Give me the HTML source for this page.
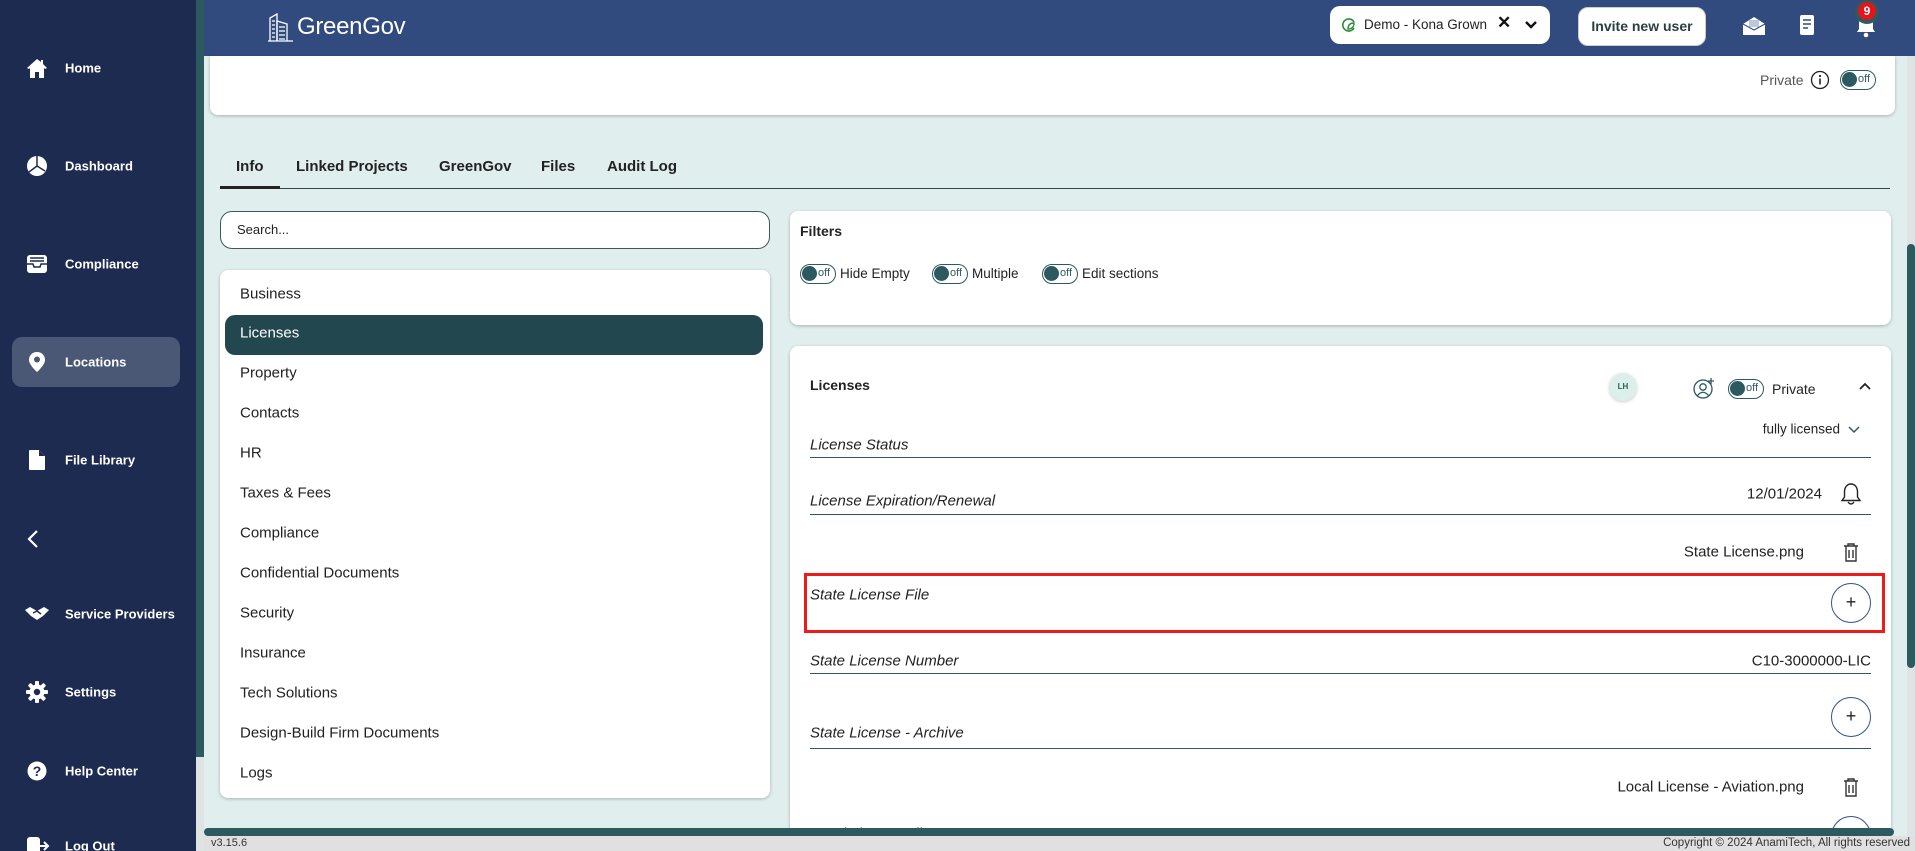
<!DOCTYPE html>
<html style="width:1915px;height:851px;overflow:hidden"><head><meta charset="utf-8">
<style>
*{box-sizing:border-box;margin:0;padding:0}
body{width:1915px;height:851px;overflow:hidden;position:relative;background:#e0eeee;font-family:"Liberation Sans",Arial,sans-serif;color:#222}
.a{position:absolute}
.side{left:0;top:0;width:196px;height:851px;background:#1e2b50}
.strip{left:196px;top:0;width:8px;height:757px;background:#2d5a5f}
.strip2{left:196px;top:757px;width:8px;height:94px;background:#dfe3e3}
.nav{left:65px;color:#fff;font-weight:bold;font-size:13px;transform:translateY(-50%)}
.ico{left:26px;transform:translateY(-50%)}
.hdr{left:204px;top:0;width:1711px;height:56px;background:#314b7f}
.card{background:#fff;border-radius:8px;box-shadow:0 1px 3px rgba(0,0,0,.25)}
.tab{top:158px;font-size:15px;font-weight:bold;color:#222}
.li{left:240px;font-size:15px;color:#222;transform:translateY(-50%)}
.lbl{left:810px;font-size:15px;font-style:italic;color:#222;transform:translateY(-50%)}
.line{left:810px;width:1061px;height:1px;background:#2d5a5f}
.val{font-size:15px;color:#222;transform:translateY(-50%)}
.tog{width:36px;height:20px;border:1.5px solid #2d5a5f;border-radius:10px;background:#fff}
.tog:before{content:"";position:absolute;left:1px;top:1px;width:15px;height:15px;border-radius:50%;background:#2d5a5f}
.tog span{position:absolute;left:17px;top:0;line-height:17px;font-size:11px;color:#2d5a5f}
.plus{width:40px;height:40px;border:1.5px solid #34508a;border-radius:50%;text-align:center;line-height:36px;font-size:18px;color:#222}
</style></head><body>
<div class="a side"></div>
<div class="a strip"></div><div class="a strip2"></div>
<div class="a" style="left:12px;top:337px;width:168px;height:50px;background:#4a5775;border-radius:10px"></div>

<svg class="a ico" style="top:68px" width="22" height="22" viewBox="0 0 22 22"><path d="M11 2 L1 11 L3 12 L4 11 V21 H9 V15 H13 V21 H18 V11 L19 12 L21 11 L17 7 V3 H15 V5 Z" fill="#fff"/></svg>
<div class="a nav" style="top:68px">Home</div>
<svg class="a ico" style="top:166px" width="22" height="22" viewBox="0 0 22 22"><circle cx="11" cy="11" r="10" fill="#fff"/><path d="M11 1 V11 L19 16" stroke="#1e2b50" stroke-width="1.5" fill="none"/><path d="M11 11 L3 17" stroke="#1e2b50" stroke-width="1.5"/></svg>
<div class="a nav" style="top:166px">Dashboard</div>
<svg class="a ico" style="top:264px" width="22" height="20" viewBox="0 0 22 20"><rect x="1" y="1" width="20" height="18" rx="3" fill="#fff"/><path d="M4 4 H18 M4 7 H18" stroke="#1e2b50" stroke-width="1.5"/><path d="M1 10 H7 L8 13 H14 L15 10 H21" stroke="#1e2b50" stroke-width="1.5" fill="none"/></svg>
<div class="a nav" style="top:264px">Compliance</div>
<svg class="a ico" style="top:362px;left:28px" width="18" height="22" viewBox="0 0 18 22"><path d="M9 1 C4 1 1 4.5 1 9 C1 14 9 21 9 21 C9 21 17 14 17 9 C17 4.5 14 1 9 1Z" fill="#fff"/><circle cx="9" cy="8.5" r="3" fill="#4a5775"/></svg>
<div class="a nav" style="top:362px">Locations</div>
<svg class="a ico" style="top:460px;left:28px" width="18" height="22" viewBox="0 0 18 22"><path d="M2 1 H11 L17 7 V20 Q17 21 16 21 H2 Q1 21 1 20 V2 Q1 1 2 1Z" fill="#fff"/><path d="M11 1 V7 H17" fill="#1e2b50"/></svg>
<div class="a nav" style="top:460px">File Library</div>
<svg class="a" style="left:26px;top:529px" width="14" height="20" viewBox="0 0 14 20"><path d="M11 2 L3 10 L11 18" stroke="#fff" stroke-width="2.2" fill="none"/></svg>
<svg class="a ico" style="top:614px;left:24px" width="26" height="18" viewBox="0 0 26 18"><path d="M1 5 L6 2 L13 6 L20 2 L25 5 L19 11 L13 15 L7 11Z" fill="#fff"/><path d="M9 8 L13 6 L17 9" stroke="#1e2b50" stroke-width="1.5" fill="none"/></svg>
<div class="a nav" style="top:614px">Service Providers</div>
<svg class="a ico" style="top:692px" width="22" height="22" viewBox="0 0 22 22"><g fill="#fff"><circle cx="11" cy="11" r="7.5"/><rect x="9" y="0" width="4" height="22" rx="1"/><rect x="0" y="9" width="22" height="4" rx="1"/><rect x="9" y="0" width="4" height="22" rx="1" transform="rotate(45 11 11)"/><rect x="9" y="0" width="4" height="22" rx="1" transform="rotate(-45 11 11)"/></g><circle cx="11" cy="11" r="3.2" fill="#1e2b50"/></svg>
<div class="a nav" style="top:692px">Settings</div>
<svg class="a ico" style="top:771px;left:27px" width="20" height="20" viewBox="0 0 20 20"><circle cx="10" cy="10" r="9.5" fill="#fff"/><text x="10" y="15" text-anchor="middle" font-size="14" font-weight="bold" fill="#1e2b50" font-family="Liberation Sans">?</text></svg>
<div class="a nav" style="top:771px">Help Center</div>
<svg class="a ico" style="top:846px;left:26px" width="24" height="20" viewBox="0 0 24 20"><rect x="1" y="1" width="13" height="18" rx="3" fill="#fff"/><path d="M12 10 H22 M18 6 L22 10 L18 14" stroke="#fff" stroke-width="2" fill="none"/></svg>
<div class="a nav" style="top:846px">Log Out</div>

<div class="a hdr"></div>
<svg class="a" style="left:267px;top:13px" width="27" height="29" viewBox="0 0 27 29"><g stroke="#fff" stroke-width="1.3" fill="none"><path d="M3 28 V5 L10 1 V28"/><path d="M10 28 V8 L20 11 V28"/><path d="M5 8 H8 M5 12 H8 M5 16 H8 M5 20 H8 M5 24 H8 M12 14 H18 M12 18 H18 M12 22 H18 M12 26 H18"/><path d="M1 28 H26"/></g></svg>
<div class="a" style="left:297px;top:13px;font-size:24px;color:#fff;letter-spacing:-0.3px">GreenGov</div>

<div class="a" style="left:1330px;top:6px;width:220px;height:38px;background:#fff;border-radius:10px"></div>
<svg class="a" style="left:1341px;top:17px" width="16" height="16" viewBox="0 0 16 16"><path d="M13 5 A6 6 0 1 0 13 11" stroke="#2e8b3a" stroke-width="1.6" fill="none"/><path d="M7 12 Q7 6 13 6 Q13 12 7 12Z" stroke="#2e8b3a" stroke-width="1.4" fill="none"/></svg>
<div class="a" style="left:1364px;top:17px;font-size:13.5px;color:#222">Demo - Kona Grown</div>
<div class="a" style="left:1497px;top:13px;font-size:17px;font-weight:bold;color:#111">✕</div>
<svg class="a" style="left:1524px;top:20px" width="14" height="10" viewBox="0 0 14 10"><path d="M2 2 L7 7 L12 2" stroke="#111" stroke-width="2.4" fill="none"/></svg>
<div class="a" style="left:1578px;top:7px;width:128px;height:39px;background:#fff;border-radius:10px;border:1px solid #ccc;text-align:center;line-height:37px;font-size:14px;font-weight:bold;color:#2a3f3f">Invite new user</div>
<svg class="a" style="left:1742px;top:16px" width="24" height="20" viewBox="0 0 24 20"><path d="M1 8 L12 1 L23 8 V19 H1Z" fill="#fff"/><rect x="7" y="4" width="10" height="7" fill="#bcc8e0"/><path d="M1 8 L12 14 L23 8" stroke="#314b7f" stroke-width="1" fill="none"/></svg>
<svg class="a" style="left:1799px;top:14px" width="16" height="22" viewBox="0 0 16 22"><rect x="1" y="1" width="14" height="20" rx="2" fill="#fff"/><path d="M4 6 H12 M4 10 H12 M4 14 H9" stroke="#314b7f" stroke-width="1.5"/></svg>
<svg class="a" style="left:1855px;top:14px" width="22" height="24" viewBox="0 0 22 24"><path d="M11 2 C6 2 4 6 4 10 V15 L2 18 H20 L18 15 V10 C18 6 16 2 11 2Z" fill="#fff"/><circle cx="11" cy="21" r="2.3" fill="#fff"/></svg>
<div class="a" style="left:1855px;top:0px;width:24px;height:24px;border-radius:50%;background:#2d5a5f"></div>
<div class="a" style="left:1858px;top:2px;width:18px;height:18px;border-radius:50%;background:#e3141b;color:#fff;font-size:12px;font-weight:bold;text-align:center;line-height:18px">9</div>

<div class="a card" style="left:210px;top:56px;width:1685px;height:59px;border-radius:0 0 8px 8px"></div>
<div class="a" style="left:1760px;top:72px;font-size:14px;color:#555">Private</div>
<svg class="a" style="left:1810px;top:70px" width="20" height="20" viewBox="0 0 20 20"><circle cx="10" cy="10" r="8.5" stroke="#222" stroke-width="1.3" fill="none"/><path d="M10 8.5 V14.5" stroke="#222" stroke-width="1.6"/><circle cx="10" cy="6" r="1.1" fill="#222"/></svg>
<div class="a tog" style="left:1840px;top:70px"><span>off</span></div>

<div class="a tab" style="left:236px">Info</div>
<div class="a tab" style="left:296px">Linked Projects</div>
<div class="a tab" style="left:439px">GreenGov</div>
<div class="a tab" style="left:541px">Files</div>
<div class="a tab" style="left:607px">Audit Log</div>
<div class="a" style="left:220px;top:188px;width:1670px;height:1px;background:#2d4a50"></div>
<div class="a" style="left:220px;top:186px;width:60px;height:3px;background:#222"></div>

<div class="a" style="left:220px;top:211px;width:550px;height:38px;background:#fff;border:1.5px solid #3d5a5a;border-radius:12px"></div>
<div class="a" style="left:237px;top:222px;font-size:13px;color:#222">Search...</div>

<div class="a card" style="left:220px;top:270px;width:550px;height:528px"></div>
<div class="a" style="left:225px;top:315px;width:538px;height:40px;background:#23474f;border-radius:10px"></div>
<div class="a li" style="top:294px">Business</div>
<div class="a li" style="top:333px;color:#fff">Licenses</div>
<div class="a li" style="top:373px">Property</div>
<div class="a li" style="top:413px">Contacts</div>
<div class="a li" style="top:453px">HR</div>
<div class="a li" style="top:493px">Taxes &amp; Fees</div>
<div class="a li" style="top:533px">Compliance</div>
<div class="a li" style="top:573px">Confidential Documents</div>
<div class="a li" style="top:613px">Security</div>
<div class="a li" style="top:653px">Insurance</div>
<div class="a li" style="top:693px">Tech Solutions</div>
<div class="a li" style="top:733px">Design-Build Firm Documents</div>
<div class="a li" style="top:773px">Logs</div>

<div class="a card" style="left:790px;top:211px;width:1101px;height:114px"></div>
<div class="a" style="left:800px;top:223px;font-size:14px;font-weight:bold">Filters</div>
<div class="a tog" style="left:800px;top:264px"><span>off</span></div>
<div class="a" style="left:840px;top:266px;font-size:13.5px">Hide Empty</div>
<div class="a tog" style="left:932px;top:264px"><span>off</span></div>
<div class="a" style="left:972px;top:266px;font-size:13.5px">Multiple</div>
<div class="a tog" style="left:1042px;top:264px"><span>off</span></div>
<div class="a" style="left:1082px;top:266px;font-size:13.5px">Edit sections</div>

<div class="a card" style="left:790px;top:346px;width:1101px;height:505px;border-radius:8px 8px 0 0"></div>
<div class="a" style="left:810px;top:377px;font-size:14px;font-weight:bold">Licenses</div>
<div class="a" style="left:1609px;top:373px;width:28px;height:28px;border-radius:50%;background:#dcefea;box-shadow:0 1px 3px rgba(0,0,0,.2);text-align:center;line-height:28px;font-size:8px;font-weight:bold;color:#2a6050">LH</div>
<svg class="a" style="left:1693px;top:377px" width="22" height="22" viewBox="0 0 22 22"><circle cx="10" cy="12" r="9" stroke="#2d5a5f" stroke-width="1.3" fill="none"/><circle cx="10" cy="10" r="3.2" stroke="#2d5a5f" stroke-width="1.3" fill="none"/><path d="M4.5 18.5 Q10 12 15.5 18.5" stroke="#2d5a5f" stroke-width="1.3" fill="none"/><path d="M18 1 V7 M15 4 H21" stroke="#2d5a5f" stroke-width="1.3"/></svg>
<div class="a tog" style="left:1728px;top:379px"><span>off</span></div>
<div class="a" style="left:1772px;top:381px;font-size:14px">Private</div>
<svg class="a" style="left:1858px;top:381px" width="14" height="10" viewBox="0 0 14 10"><path d="M2 8 L7 3 L12 8" stroke="#222" stroke-width="1.8" fill="none"/></svg>

<div class="a lbl" style="top:445px">License Status</div>
<div class="a val" style="top:429px;right:75px;font-size:13.5px">fully licensed</div>
<svg class="a" style="left:1847px;top:425px" width="14" height="9" viewBox="0 0 14 9"><path d="M2 2 L7 7 L12 2" stroke="#2d5a5f" stroke-width="1.5" fill="none"/></svg>
<div class="a line" style="top:457px"></div>

<div class="a lbl" style="top:501px">License Expiration/Renewal</div>
<div class="a val" style="top:494px;right:93px">12/01/2024</div>
<svg class="a" style="left:1840px;top:482px" width="22" height="24" viewBox="0 0 22 24"><path d="M11 2 C6.5 2 4.5 6 4.5 10 V15 L2 18.5 H20 L17.5 15 V10 C17.5 6 15.5 2 11 2Z" stroke="#222" stroke-width="1.4" fill="none"/><path d="M8 20 Q11 24 14 20" stroke="#222" stroke-width="1.4" fill="none"/></svg>
<div class="a line" style="top:514px"></div>

<div class="a val" style="top:552px;right:111px">State License.png</div>
<svg class="a" style="left:1843px;top:542px" width="16" height="20" viewBox="0 0 16 20"><path d="M1 4 H15 M5 4 V2 H11 V4 M3 4 V19 H13 V4 M6 8 V16 M10 8 V16" stroke="#333" stroke-width="1.4" fill="none"/></svg>

<div class="a" style="left:804px;top:573px;width:1081px;height:60px;border:3px solid #f01a1a"></div>
<div class="a lbl" style="top:595px">State License File</div>
<div class="a plus" style="left:1831px;top:583px">+</div>

<div class="a lbl" style="top:661px">State License Number</div>
<div class="a val" style="top:661px;right:44px">C10-3000000-LIC</div>
<div class="a line" style="top:673px"></div>

<div class="a plus" style="left:1831px;top:697px">+</div>
<div class="a lbl" style="top:733px">State License - Archive</div>
<div class="a line" style="top:748px"></div>

<div class="a val" style="top:787px;right:111px">Local License - Aviation.png</div>
<svg class="a" style="left:1843px;top:777px" width="16" height="20" viewBox="0 0 16 20"><path d="M1 4 H15 M5 4 V2 H11 V4 M3 4 V19 H13 V4 M6 8 V16 M10 8 V16" stroke="#333" stroke-width="1.4" fill="none"/></svg>
<div class="a plus" style="left:1831px;top:816px"></div>
<div class="a lbl" style="top:834px">Local License File</div>

<div class="a" style="left:1907px;top:56px;width:8px;height:795px;background:#e0e3e3"></div>
<div class="a" style="left:1907px;top:244px;width:8px;height:424px;background:#2d5a5f;border-radius:4px"></div>
<div class="a" style="left:204px;top:828px;width:1690px;height:8px;background:#2d5a5f;border-radius:4px"></div>
<div class="a" style="left:204px;top:836px;width:1711px;height:15px;background:#e0e0e0"></div>
<div class="a" style="left:211px;top:837px;font-size:11px;color:#333">v3.15.6</div>
<div class="a" style="right:5px;top:837px;font-size:11.5px;color:#333">Copyright © 2024 AnamiTech, All rights reserved</div>
</body></html>
